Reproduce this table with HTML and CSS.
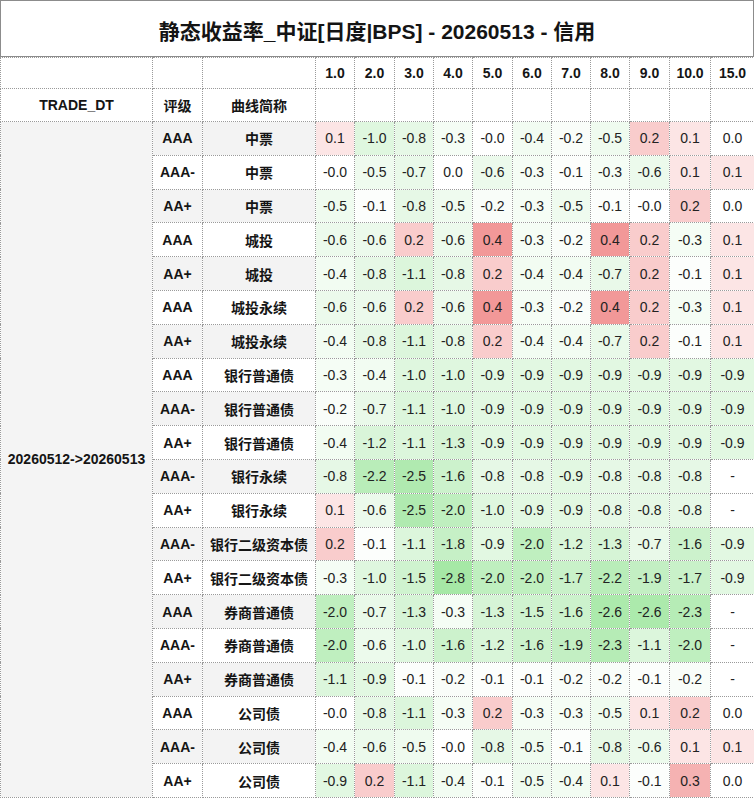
FILE: index.html
```html
<!DOCTYPE html>
<html lang="zh">
<head>
<meta charset="utf-8">
<title>静态收益率_中证</title>
<link rel="stylesheet" href="styles.css">
</head>
<body>
<div class="title">静态收益率_中证[日度|BPS] - 20260513 - 信用</div>
<table class="grid">
<colgroup>
<col class="c-dt"><col class="c-rt"><col class="c-nm">
<col class="c39"><col class="c40"><col class="c39"><col class="c39"><col class="c40"><col class="c39"><col class="c39"><col class="c39"><col class="c40"><col class="c41"><col class="c44">
</colgroup>
<thead>
<tr class="h1"><th></th><th></th><th></th><th>1.0</th><th>2.0</th><th>3.0</th><th>4.0</th><th>5.0</th><th>6.0</th><th>7.0</th><th>8.0</th><th>9.0</th><th>10.0</th><th>15.0</th></tr>
<tr class="h2"><th>TRADE_DT</th><th>评级</th><th>曲线简称</th><th></th><th></th><th></th><th></th><th></th><th></th><th></th><th></th><th></th><th></th><th></th></tr>
</thead>
<tbody>
<tr class="alt"><th class="dt" rowspan="20">20260512-&gt;20260513</th><th class="rt">AAA</th><th class="nm">中票</th><td>0.1</td><td>-1.0</td><td>-0.8</td><td>-0.3</td><td>-0.0</td><td>-0.4</td><td>-0.2</td><td>-0.5</td><td>0.2</td><td>0.1</td><td>0.0</td></tr>
<tr><th class="rt">AAA-</th><th class="nm">中票</th><td>-0.0</td><td>-0.5</td><td>-0.7</td><td>0.0</td><td>-0.6</td><td>-0.3</td><td>-0.1</td><td>-0.3</td><td>-0.6</td><td>0.1</td><td>0.1</td></tr>
<tr class="alt"><th class="rt">AA+</th><th class="nm">中票</th><td>-0.5</td><td>-0.1</td><td>-0.8</td><td>-0.5</td><td>-0.2</td><td>-0.3</td><td>-0.5</td><td>-0.1</td><td>-0.0</td><td>0.2</td><td>0.0</td></tr>
<tr><th class="rt">AAA</th><th class="nm">城投</th><td>-0.6</td><td>-0.6</td><td>0.2</td><td>-0.6</td><td>0.4</td><td>-0.3</td><td>-0.2</td><td>0.4</td><td>0.2</td><td>-0.3</td><td>0.1</td></tr>
<tr class="alt"><th class="rt">AA+</th><th class="nm">城投</th><td>-0.4</td><td>-0.8</td><td>-1.1</td><td>-0.8</td><td>0.2</td><td>-0.4</td><td>-0.4</td><td>-0.7</td><td>0.2</td><td>-0.1</td><td>0.1</td></tr>
<tr><th class="rt">AAA</th><th class="nm">城投永续</th><td>-0.6</td><td>-0.6</td><td>0.2</td><td>-0.6</td><td>0.4</td><td>-0.3</td><td>-0.2</td><td>0.4</td><td>0.2</td><td>-0.3</td><td>0.1</td></tr>
<tr class="alt"><th class="rt">AA+</th><th class="nm">城投永续</th><td>-0.4</td><td>-0.8</td><td>-1.1</td><td>-0.8</td><td>0.2</td><td>-0.4</td><td>-0.4</td><td>-0.7</td><td>0.2</td><td>-0.1</td><td>0.1</td></tr>
<tr><th class="rt">AAA</th><th class="nm">银行普通债</th><td>-0.3</td><td>-0.4</td><td>-1.0</td><td>-1.0</td><td>-0.9</td><td>-0.9</td><td>-0.9</td><td>-0.9</td><td>-0.9</td><td>-0.9</td><td>-0.9</td></tr>
<tr class="alt"><th class="rt">AAA-</th><th class="nm">银行普通债</th><td>-0.2</td><td>-0.7</td><td>-1.1</td><td>-1.0</td><td>-0.9</td><td>-0.9</td><td>-0.9</td><td>-0.9</td><td>-0.9</td><td>-0.9</td><td>-0.9</td></tr>
<tr><th class="rt">AA+</th><th class="nm">银行普通债</th><td>-0.4</td><td>-1.2</td><td>-1.1</td><td>-1.3</td><td>-0.9</td><td>-0.9</td><td>-0.9</td><td>-0.9</td><td>-0.9</td><td>-0.9</td><td>-0.9</td></tr>
<tr class="alt"><th class="rt">AAA-</th><th class="nm">银行永续</th><td>-0.8</td><td>-2.2</td><td>-2.5</td><td>-1.6</td><td>-0.8</td><td>-0.8</td><td>-0.9</td><td>-0.8</td><td>-0.8</td><td>-0.8</td><td>-</td></tr>
<tr><th class="rt">AA+</th><th class="nm">银行永续</th><td>0.1</td><td>-0.6</td><td>-2.5</td><td>-2.0</td><td>-1.0</td><td>-0.9</td><td>-0.9</td><td>-0.8</td><td>-0.8</td><td>-0.8</td><td>-</td></tr>
<tr class="alt"><th class="rt">AAA-</th><th class="nm">银行二级资本债</th><td>0.2</td><td>-0.1</td><td>-1.1</td><td>-1.8</td><td>-0.9</td><td>-2.0</td><td>-1.2</td><td>-1.3</td><td>-0.7</td><td>-1.6</td><td>-0.9</td></tr>
<tr><th class="rt">AA+</th><th class="nm">银行二级资本债</th><td>-0.3</td><td>-1.0</td><td>-1.5</td><td>-2.8</td><td>-2.0</td><td>-2.0</td><td>-1.7</td><td>-2.2</td><td>-1.9</td><td>-1.7</td><td>-0.9</td></tr>
<tr class="alt"><th class="rt">AAA</th><th class="nm">券商普通债</th><td>-2.0</td><td>-0.7</td><td>-1.3</td><td>-0.3</td><td>-1.3</td><td>-1.5</td><td>-1.6</td><td>-2.6</td><td>-2.6</td><td>-2.3</td><td>-</td></tr>
<tr><th class="rt">AAA-</th><th class="nm">券商普通债</th><td>-2.0</td><td>-0.6</td><td>-1.0</td><td>-1.6</td><td>-1.2</td><td>-1.6</td><td>-1.9</td><td>-2.3</td><td>-1.1</td><td>-2.0</td><td>-</td></tr>
<tr class="alt"><th class="rt">AA+</th><th class="nm">券商普通债</th><td>-1.1</td><td>-0.9</td><td>-0.1</td><td>-0.2</td><td>-0.1</td><td>-0.1</td><td>-0.2</td><td>-0.2</td><td>-0.1</td><td>-0.2</td><td>-</td></tr>
<tr><th class="rt">AAA</th><th class="nm">公司债</th><td>-0.0</td><td>-0.8</td><td>-1.1</td><td>-0.3</td><td>0.2</td><td>-0.3</td><td>-0.3</td><td>-0.5</td><td>0.1</td><td>0.2</td><td>0.0</td></tr>
<tr class="alt"><th class="rt">AAA-</th><th class="nm">公司债</th><td>-0.4</td><td>-0.6</td><td>-0.5</td><td>-0.0</td><td>-0.8</td><td>-0.5</td><td>-0.1</td><td>-0.8</td><td>-0.6</td><td>0.1</td><td>0.1</td></tr>
<tr><th class="rt">AA+</th><th class="nm">公司债</th><td>-0.9</td><td>0.2</td><td>-1.1</td><td>-0.4</td><td>-0.1</td><td>-0.5</td><td>-0.4</td><td>0.1</td><td>-0.1</td><td>0.3</td><td>0.0</td></tr>
</tbody>
</table>
<script src="script.js"></script>
</body>
</html>
```

FILE: styles.css
```css
html, body {
  margin: 0;
  padding: 0;
  background: #ffffff;
}

body {
  font-family: "Liberation Sans", "Noto Sans CJK SC", sans-serif;
  color: #222222;
  width: 754px;
}

.title {
  box-sizing: border-box;
  height: 57px;
  border: 1px solid #8c8c8c;
  display: flex;
  align-items: center;
  justify-content: center;
  padding-top: 3px;
  font-size: 21px;
  font-weight: bold;
  color: #141414;
}

.grid {
  border-collapse: collapse;
  table-layout: fixed;
  width: 754px;
}

.c-dt { width: 152px; }
.c-rt { width: 50px; }
.c-nm { width: 113px; }
.c39 { width: 39px; }
.c40 { width: 40px; }
.c41 { width: 41px; }
.c44 { width: 44px; }

.grid th,
.grid td {
  border: 1px dotted #9a9a9a;
  padding: 0;
  text-align: center;
  vertical-align: middle;
  font-size: 14px;
  white-space: nowrap;
  overflow: hidden;
}

.grid th {
  font-weight: bold;
  color: #151515;
  background: #ffffff;
}

.grid td {
  font-weight: normal;
  color: #222222;
}

.grid .h1 { height: 31px; }
.grid .h2 { height: 33px; }
.grid tbody tr { height: 33.8px; }

.grid .dt {
  background: #f4f4f4;
}

.grid .alt .rt,
.grid .alt .nm {
  background: #f3f3f3;
}
```

FILE: script.js
```js
(function () {
  var white = [255, 255, 255];
  var red = [242, 152, 152];
  var green = [166, 232, 166];
  function mix(a, b, t) {
    return 'rgb(' + a.map(function (v, i) {
      return Math.round(v + (b[i] - v) * t);
    }).join(',') + ')';
  }
  var cells = document.querySelectorAll('.grid tbody td');
  cells.forEach(function (td) {
    var v = parseFloat(td.textContent);
    if (isNaN(v) || v === 0) { td.style.backgroundColor = '#ffffff'; return; }
    if (v > 0) {
      td.style.backgroundColor = mix(white, red, Math.min(v / 0.4, 1));
    } else {
      td.style.backgroundColor = mix(white, green, Math.min(-v / 2.8, 1));
    }
  });
})();
```
